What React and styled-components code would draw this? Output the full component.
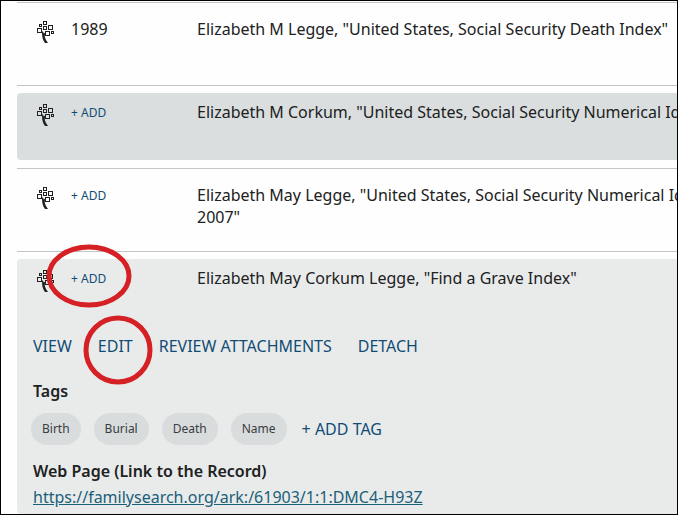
import React from "react";
import styled, { createGlobalStyle } from "styled-components";

const GlobalStyle = createGlobalStyle`
  * {
    box-sizing: border-box;
  }
  body {
    margin: 0;
    background-color: #fefefe;
    color: #202121;
    font-family: "Noto Sans", sans-serif;
    font-size: 16px;
    line-height: 22px;
  }
`;

const Page = styled.main`
  min-height: 100vh;
  border: 1px solid #000;
  padding: 1px 0 0 16px;
  display: flex;
  flex-direction: column;
  overflow: hidden;
`;

const SourceList = styled.ul`
  flex: 1;
  display: flex;
  flex-direction: column;
  margin: 0;
  padding: 0;
  list-style: none;
`;

const SourceItem = styled.li`
  display: flex;
  flex-direction: column;
  flex-grow: ${(props) => (props.$open ? 1 : 0)};
  border-top: 1px solid #c3c6c6;
  padding: 7px 0 ${(props) => (props.$open ? "0" : "8px")};
`;

const Card = styled.article`
  flex: 1;
  border-radius: 4px 0 0 4px;
  background-color: ${(props) => props.$bg || "transparent"};
`;

const Row = styled.div`
  display: grid;
  grid-template-columns: 18px 110px 1fr;
  column-gap: 16px;
  align-items: start;
  min-height: 67px;
  padding: 8px 0 8px 20px;
`;

const TreeIcon = styled.svg`
  display: block;
  width: 18px;
  height: 26px;
`;

const Title = styled.span`
  white-space: pre;
`;

const TextButton = styled.button`
  position: relative;
  justify-self: start;
  border: none;
  padding: 0;
  background: none;
  color: #124c74;
  font-family: inherit;
  font-size: ${(props) => (props.$small ? "12px" : "16px")};
  line-height: ${(props) => (props.$small ? "24px" : "22px")};
  white-space: nowrap;
  cursor: pointer;
`;

const Mark = styled.svg`
  position: absolute;
  top: ${(props) => props.$top}px;
  left: ${(props) => props.$left}px;
  width: ${(props) => props.$w}px;
  height: ${(props) => props.$h}px;
  pointer-events: none;
`;

const Details = styled.div`
  padding: 9px 16px 6px 14px;
`;

const Actions = styled.div`
  display: flex;
  gap: 26px;
  padding: 0 2px;
`;

const Heading = styled.h3`
  margin: ${(props) => props.$top} 0 0;
  padding: 0 2px;
  font-size: 16px;
  font-weight: 600;
  line-height: 22px;
`;

const Tags = styled.div`
  display: flex;
  align-items: center;
  gap: 13px;
  margin-top: 11px;
`;

const Tag = styled.span`
  height: 32px;
  border-radius: 16px;
  padding: 0 11px;
  background-color: #d8dcdd;
  color: #3a3c3d;
  font-size: 12px;
  line-height: 32px;
`;

const TagAction = styled.div`
  padding-left: 2px;
`;

const RecordLink = styled.a`
  display: inline-block;
  margin-top: 4px;
  padding: 0 2px;
  color: #1a6079;
`;

const Tree = () => (
  <TreeIcon viewBox="0 -1 18 26" fill="none" stroke="#202121" aria-hidden="true">
    <rect x="6.5" y="2.5" width="3" height="3" />
    <rect x="2.5" y="5.5" width="2" height="2" />
    <rect x="6.5" y="7.5" width="3" height="3" />
    <rect x="11.5" y="6.5" width="4" height="4" />
    <rect x="0.5" y="9.5" width="4" height="4" />
    <rect x="8.5" y="12.5" width="4" height="4" />
    <rect x="14.5" y="12.5" width="2" height="2" />
    <path d="M5 12.5C5 18 5.8 21 8 24H11C8.6 21 7.6 18.5 7.8 16L8.5 13.2L6.8 14.5L6 12.5Z" fill="#202121" stroke="none" />
  </TreeIcon>
);

const EllipseMark = ({ top, left, width, height }) => (
  <Mark
    $top={top}
    $left={left}
    $w={width}
    $h={height}
    viewBox={`0 0 ${width} ${height}`}
    aria-hidden="true"
  >
    <ellipse
      cx={width / 2}
      cy={height / 2}
      rx={width / 2 - 3}
      ry={height / 2 - 3}
      fill="none"
      stroke="#d52125"
      strokeWidth="5"
    />
  </Mark>
);

const sources = [
  { year: "1989", title: 'Elizabeth M Legge, "United States, Social Security Death Index"' },
  { title: 'Elizabeth M Corkum, "United States, Social Security Numerical Id', bg: "#dadedf" },
  { title: 'Elizabeth May Legge, "United States, Social Security Numerical Id\n2007"' },
  { title: 'Elizabeth May Corkum Legge, "Find a Grave Index"', bg: "#e9ebeb", open: true },
];

const tags = ["Birth", "Burial", "Death", "Name"];

const SourceDetails = () => (
  <Details>
    <Actions>
      <TextButton>VIEW</TextButton>
      <TextButton>
        EDIT
        <EllipseMark top={-20} left={-15} width={70} height={70} />
      </TextButton>
      <TextButton>REVIEW ATTACHMENTS</TextButton>
      <TextButton>DETACH</TextButton>
    </Actions>
    <Heading $top="23px">Tags</Heading>
    <Tags>
      {tags.map((tag) => (
        <Tag key={tag}>{tag}</Tag>
      ))}
      <TagAction>
        <TextButton>+ ADD TAG</TextButton>
      </TagAction>
    </Tags>
    <Heading $top="15px">Web Page (Link to the Record)</Heading>
    <RecordLink href="https://familysearch.org/ark:/61903/1:1:DMC4-H93Z">
      https://familysearch.org/ark:/61903/1:1:DMC4-H93Z
    </RecordLink>
  </Details>
);

const App = () => {
  return (
    <>
      <GlobalStyle />
      <Page>
        <SourceList>
          {sources.map((source) => (
            <SourceItem key={source.title} $open={source.open}>
              <Card $bg={source.bg}>
                <Row>
                  <Tree />
                  {source.year ? (
                    <span>{source.year}</span>
                  ) : (
                    <TextButton $small>
                      + ADD
                      {source.open && <EllipseMark top={-23} left={-25} width={86} height={64} />}
                    </TextButton>
                  )}
                  <Title>{source.title}</Title>
                </Row>
                {source.open && <SourceDetails />}
              </Card>
            </SourceItem>
          ))}
        </SourceList>
      </Page>
    </>
  );
};

export default App;
